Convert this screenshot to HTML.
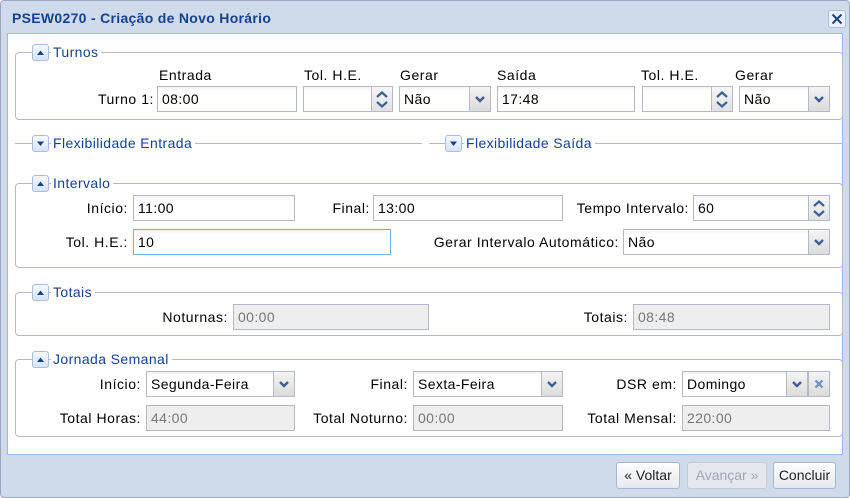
<!DOCTYPE html>
<html><head><meta charset="utf-8"><style>
*{box-sizing:border-box;margin:0;padding:0}
body{width:850px;height:498px;overflow:hidden;background:#fff;font-family:"Liberation Sans",Tahoma,sans-serif;font-size:14px;color:#000;position:relative}
#win{position:absolute;left:0;top:0;width:850px;height:498px;background:#cfdbea;border:1px solid #99a8bd;border-radius:4px}
#title{position:absolute;left:11px;top:9px;font-weight:bold;color:#15428b;font-size:14px;letter-spacing:0.3px}
#close{position:absolute;left:827px;top:9px;width:18px;height:18px;border:1px solid #a9bfe0;border-radius:3px;background:#eef3fb}
#body{position:absolute;left:7px;top:33px;width:836px;height:422px;background:#fff;border:1px solid #99bbe8}
.fs{position:absolute;border:1px solid #b5b8c8;border-radius:4px}
.lg{position:absolute;background:#fff;color:#15428b;padding:0 3px 0 2px;height:18px;line-height:18px;white-space:nowrap;letter-spacing:0.4px}
.tg{position:absolute;width:17px;height:17px;border:1px solid #a9bfe0;border-radius:3px;background:linear-gradient(#f4f8fe,#d7e4f6)}
.line{position:absolute;height:1px;background:#b5b8c8}
.l{position:absolute;white-space:nowrap;height:26px;line-height:26px;letter-spacing:0.55px}
.r{text-align:right}
.in{position:absolute;height:26px;border:1px solid #b5b8c8;background:#fff linear-gradient(#f2f2f2,#fff 4px);padding-left:4px;line-height:24px;white-space:nowrap;letter-spacing:0.4px}
.dis{background:#eee;color:#777}
.foc{border-color:#7eadd9}
.trig{position:absolute;top:-1px;right:-1px;width:22px;height:26px;border:1px solid #b5b8c8;background:linear-gradient(#f4f4f4,#dcdcdc)}
.sp{position:absolute;top:-1px;right:-1px;width:22px;height:26px;border:1px solid #b5b8c8;background:linear-gradient(#f6f6f6,#e2e2e2)}
.btn{position:absolute;top:462px;height:27px;border:1px solid #a8b8cc;border-radius:3px;background:linear-gradient(#fdfdfd,#e6e9ee);line-height:25px;text-align:center;color:#222}
</style></head><body>
<div id="win">
<div id="title">PSEW0270 - Criação de Novo Horário</div>
<div id="close"><svg width="16" height="16"><path d="M3.5 3.5L12.5 12.5M12.5 3.5L3.5 12.5" stroke="#15428b" stroke-width="2"/></svg></div>
</div>
<div id="body"></div>

<div class="fs" style="left:15px;top:52px;width:828px;height:68px"></div>
<div class="tg" style="left:32px;top:44px"><svg width="15" height="15"><path d="M4 10L7.5 5.5L11 10Z" fill="#15428b"/></svg></div>
<div class="lg" style="left:51px;top:43px">Turnos</div>

<div class="l" style="left:159px;top:62px">Entrada</div>
<div class="l" style="left:304px;top:62px">Tol. H.E.</div>
<div class="l" style="left:400px;top:62px">Gerar</div>
<div class="l" style="left:497px;top:62px">Saída</div>
<div class="l" style="left:641px;top:62px">Tol. H.E.</div>
<div class="l" style="left:735px;top:62px">Gerar</div>
<div class="l r" style="left:60px;width:94px;top:86px">Turno 1:</div>
<div class="in" style="left:157px;top:86px;width:140px">08:00</div>
<div class="in" style="left:303px;top:86px;width:90px"><div class="sp"><svg width="20" height="24"><path d="M5 10L10 5.5L15 10" stroke="#3d5f94" stroke-width="2.2" fill="none"/><path d="M5 15L10 19.5L15 15" stroke="#3d5f94" stroke-width="2.2" fill="none"/></svg></div></div>
<div class="in" style="left:399px;top:86px;width:92px">Não<div class="trig"><svg width="20" height="24"><path d="M6 10L10 14L14 10" stroke="#3d5f94" stroke-width="2.4" fill="none"/></svg></div></div>
<div class="in" style="left:497px;top:86px;width:138px">17:48</div>
<div class="in" style="left:642px;top:86px;width:91px"><div class="sp"><svg width="20" height="24"><path d="M5 10L10 5.5L15 10" stroke="#3d5f94" stroke-width="2.2" fill="none"/><path d="M5 15L10 19.5L15 15" stroke="#3d5f94" stroke-width="2.2" fill="none"/></svg></div></div>
<div class="in" style="left:739px;top:86px;width:91px">Não<div class="trig"><svg width="20" height="24"><path d="M6 10L10 14L14 10" stroke="#3d5f94" stroke-width="2.4" fill="none"/></svg></div></div>

<div class="line" style="left:15px;top:143px;width:407px"></div>
<div class="tg" style="left:32px;top:135px"><svg width="15" height="15"><path d="M4 5.5L7.5 10L11 5.5Z" fill="#15428b"/></svg></div>
<div class="lg" style="left:51px;top:134px">Flexibilidade Entrada</div>
<div class="line" style="left:429px;top:143px;width:414px"></div>
<div class="tg" style="left:445px;top:135px"><svg width="15" height="15"><path d="M4 5.5L7.5 10L11 5.5Z" fill="#15428b"/></svg></div>
<div class="lg" style="left:464px;top:134px">Flexibilidade Saída</div>

<div class="fs" style="left:15px;top:183px;width:828px;height:85px"></div>
<div class="tg" style="left:32px;top:175px"><svg width="15" height="15"><path d="M4 10L7.5 5.5L11 10Z" fill="#15428b"/></svg></div>
<div class="lg" style="left:51px;top:174px">Intervalo</div>
<div class="l r" style="left:30px;width:98px;top:195px">Início:</div>
<div class="in" style="left:133px;top:195px;width:162px">11:00</div>
<div class="l r" style="left:300px;width:70px;top:195px">Final:</div>
<div class="in" style="left:373px;top:195px;width:190px">13:00</div>
<div class="l r" style="left:560px;width:129px;top:195px">Tempo Intervalo:</div>
<div class="in" style="left:693px;top:195px;width:137px">60<div class="sp"><svg width="20" height="24"><path d="M5 10L10 5.5L15 10" stroke="#3d5f94" stroke-width="2.2" fill="none"/><path d="M5 15L10 19.5L15 15" stroke="#3d5f94" stroke-width="2.2" fill="none"/></svg></div></div>
<div class="l r" style="left:30px;width:98px;top:229px">Tol. H.E.:</div>
<div class="in foc" style="left:133px;top:229px;width:258px">10</div>
<div class="l r" style="left:400px;width:219px;top:229px">Gerar Intervalo Automático:</div>
<div class="in" style="left:623px;top:229px;width:207px">Não<div class="trig"><svg width="20" height="24"><path d="M6 10L10 14L14 10" stroke="#3d5f94" stroke-width="2.4" fill="none"/></svg></div></div>

<div class="fs" style="left:15px;top:292px;width:828px;height:44px"></div>
<div class="tg" style="left:32px;top:284px"><svg width="15" height="15"><path d="M4 10L7.5 5.5L11 10Z" fill="#15428b"/></svg></div>
<div class="lg" style="left:51px;top:283px">Totais</div>
<div class="l r" style="left:100px;width:128px;top:304px">Noturnas:</div>
<div class="in dis" style="left:233px;top:304px;width:196px">00:00</div>
<div class="l r" style="left:500px;width:128px;top:304px">Totais:</div>
<div class="in dis" style="left:633px;top:304px;width:197px">08:48</div>

<div class="fs" style="left:15px;top:359px;width:828px;height:78px"></div>
<div class="tg" style="left:32px;top:351px"><svg width="15" height="15"><path d="M4 10L7.5 5.5L11 10Z" fill="#15428b"/></svg></div>
<div class="lg" style="left:51px;top:350px">Jornada Semanal</div>
<div class="l r" style="left:30px;width:111px;top:371px">Início:</div>
<div class="in" style="left:146px;top:371px;width:149px">Segunda-Feira<div class="trig"><svg width="20" height="24"><path d="M6 10L10 14L14 10" stroke="#3d5f94" stroke-width="2.4" fill="none"/></svg></div></div>
<div class="l r" style="left:300px;width:108px;top:371px">Final:</div>
<div class="in" style="left:413px;top:371px;width:150px">Sexta-Feira<div class="trig"><svg width="20" height="24"><path d="M6 10L10 14L14 10" stroke="#3d5f94" stroke-width="2.4" fill="none"/></svg></div></div>
<div class="l r" style="left:570px;width:107px;top:371px">DSR em:</div>
<div class="in" style="left:682px;top:371px;width:148px">Domingo
<div class="trig" style="right:21px"><svg width="20" height="24"><path d="M6 10L10 14L14 10" stroke="#3d5f94" stroke-width="2.4" fill="none"/></svg></div>
<div class="trig"><svg width="20" height="24"><path d="M6.5 8.5L13.5 15.5M13.5 8.5L6.5 15.5" stroke="#6a8fc4" stroke-width="2.2"/></svg></div></div>
<div class="l r" style="left:30px;width:111px;top:405px">Total Horas:</div>
<div class="in dis" style="left:146px;top:405px;width:149px">44:00</div>
<div class="l r" style="left:300px;width:108px;top:405px">Total Noturno:</div>
<div class="in dis" style="left:413px;top:405px;width:150px">00:00</div>
<div class="l r" style="left:570px;width:107px;top:405px">Total Mensal:</div>
<div class="in dis" style="left:682px;top:405px;width:148px">220:00</div>

<div class="btn" style="left:616px;width:64px">« Voltar</div>
<div class="btn" style="left:687px;width:80px;color:#a0a8b4;border-color:#c4ccd8;background:#e4e8ee">Avançar »</div>
<div class="btn" style="left:773px;width:63px">Concluir</div>
</body></html>
